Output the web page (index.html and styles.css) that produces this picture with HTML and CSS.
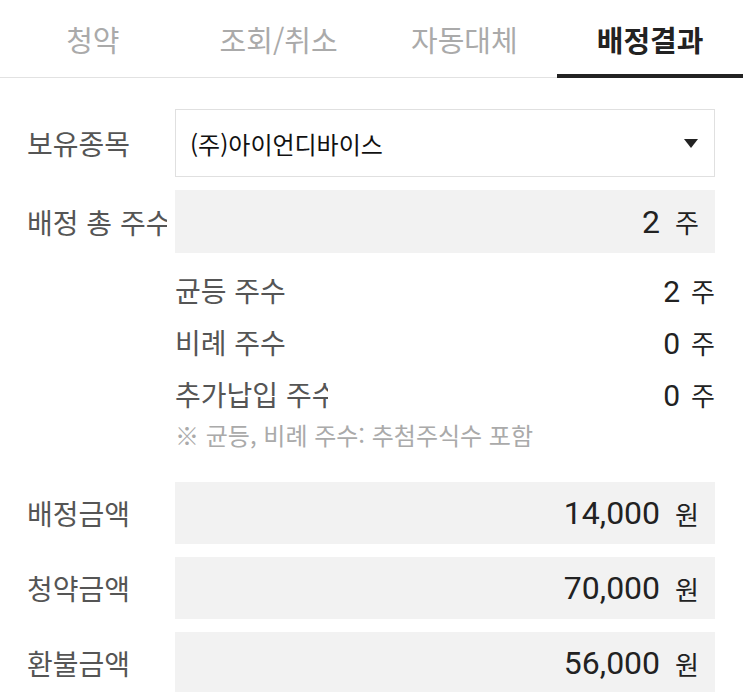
FILE: index.html
```html
<!DOCTYPE html>
<html lang="ko">
<head>
    <meta charset="UTF-8">
    <meta name="viewport" content="width=device-width, initial-scale=1.0">
    <title>배정결과</title>
    <link rel="stylesheet" href="styles.css">
</head>
<body>
    <div class="tabs">
        <div class="tab">청약</div>
        <div class="tab">조회/취소</div>
        <div class="tab">자동대체</div>
        <div class="tab active">배정결과</div>
    </div>

    <div class="content">
        <div class="row row-select">
            <div class="label">보유종목</div>
            <div class="select">
                <span>(주)아이언디바이스</span>
                <svg class="caret" width="14" height="9" viewBox="0 0 14 9"><path d="M0 0H14L7 9Z" fill="#222"/></svg>
            </div>
        </div>

        <div class="row row-box">
            <div class="label">배정 총 주수</div>
            <div class="box"><span class="num">2</span><span class="unit">주</span></div>
        </div>

        <div class="detail">
            <div class="sub-row">
                <div class="sub-label">균등 주수</div>
                <div class="sub-value"><span class="num">2</span><span class="unit">주</span></div>
            </div>
            <div class="sub-row">
                <div class="sub-label">비례 주수</div>
                <div class="sub-value"><span class="num">0</span><span class="unit">주</span></div>
            </div>
            <div class="sub-row">
                <div class="sub-label">추가납입 주수</div>
                <div class="sub-value"><span class="num">0</span><span class="unit">주</span></div>
            </div>
            <div class="note">※ 균등, 비례 주수: 추첨주식수 포함</div>
        </div>

        <div class="row row-box money first">
            <div class="label">배정금액</div>
            <div class="box"><span class="num">14,000</span><span class="unit">원</span></div>
        </div>
        <div class="row row-box money">
            <div class="label">청약금액</div>
            <div class="box"><span class="num">70,000</span><span class="unit">원</span></div>
        </div>
        <div class="row row-box money">
            <div class="label">환불금액</div>
            <div class="box"><span class="num">56,000</span><span class="unit">원</span></div>
        </div>
    </div>
</body>
</html>
```

FILE: styles.css
```css
body {
    margin: 0;
    padding: 0;
    background-color: #fff;
    font-family: "Noto Sans CJK KR", "Noto Sans", sans-serif;
    color: #222;
}

.tabs {
    display: flex;
    height: 78px;
    border-bottom: 1px solid #e2e2e2;
    box-sizing: border-box;
}

.tab {
    flex: 1;
    display: flex;
    justify-content: center;
    align-items: center;
    font-size: 29px;
    color: #aaa;
    box-sizing: border-box;
    padding-top: 1px;
}

.tab.active {
    color: #222;
    font-weight: 700;
    border-bottom: 4px solid #222;
    margin-bottom: -1px;
    padding-top: 4px;
}

.content {
    padding: 31px 28px 0 27px;
}

.row {
    display: grid;
    grid-template-columns: 140px 1fr;
    column-gap: 8px;
    align-items: center;
}

.label {
    font-size: 28px;
    color: #555;
    white-space: nowrap;
    overflow: hidden;
}

.select {
    height: 68px;
    box-sizing: border-box;
    border: 1px solid #e0e0e0;
    padding: 0 16px 0 14px;
    display: flex;
    justify-content: space-between;
    align-items: center;
    font-size: 24px;
    color: #111;
}

.row-box {
    margin-top: 13px;
}

.box {
    height: 63px;
    box-sizing: border-box;
    background-color: #f2f2f2;
    padding-right: 16px;
    display: flex;
    justify-content: flex-end;
    align-items: center;
}

.money .box {
    height: 62px;
}

.money.first {
    margin-top: 32px;
}

.num {
    font-family: Roboto, "Noto Sans", sans-serif;
    font-size: 32px;
    color: #222;
}

.unit {
    font-size: 26px;
    color: #222;
    margin-left: 15px;
}

.detail {
    margin-left: 148px;
    padding-top: 11px;
}

.sub-row {
    display: flex;
    justify-content: space-between;
    align-items: center;
    height: 52px;
}

.sub-label {
    width: 153px;
    font-size: 28px;
    color: #555;
    white-space: nowrap;
    overflow: hidden;
}

.sub-value .num {
    font-size: 30px;
}

.sub-value .unit {
    margin-left: 11px;
}

.note {
    font-size: 24px;
    color: #aaa;
    line-height: 30px;
}
```
